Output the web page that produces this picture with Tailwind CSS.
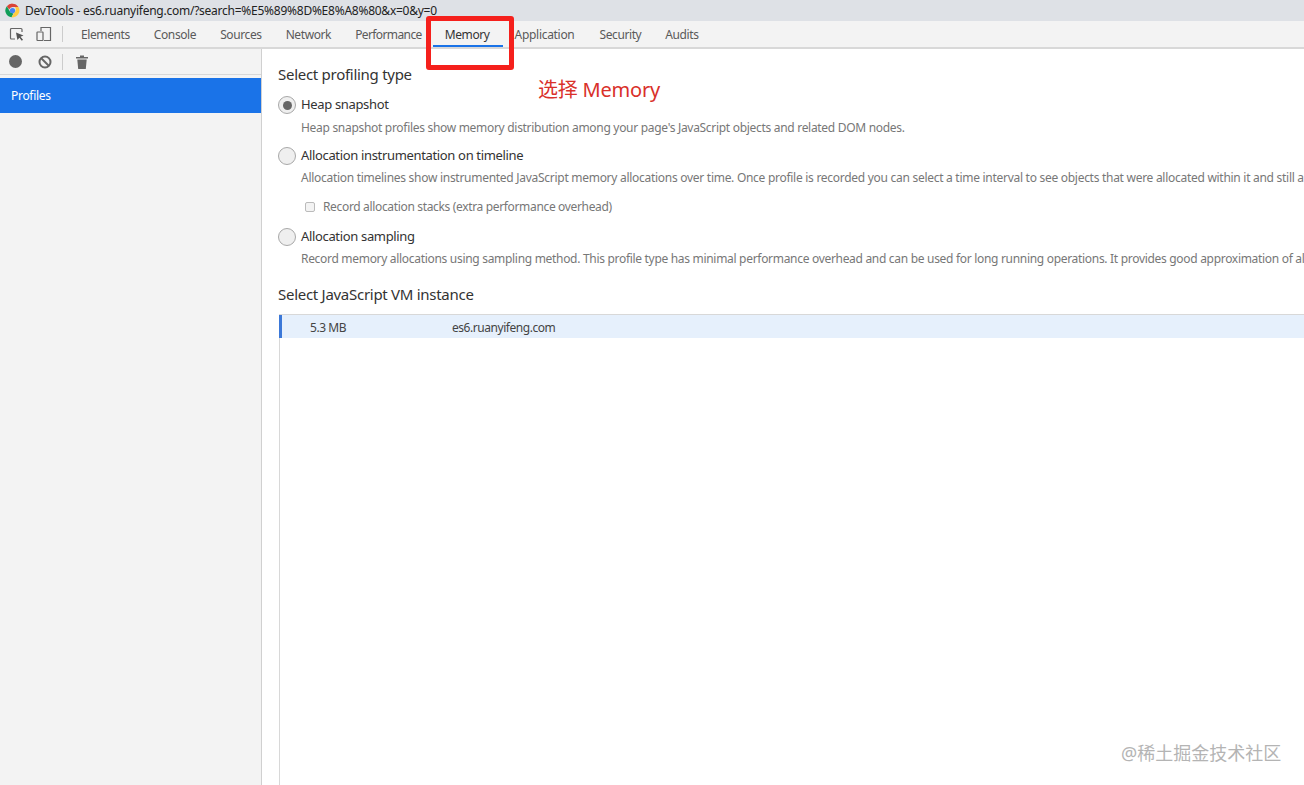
<!DOCTYPE html>
<html lang="zh">
<head>
  <meta charset="UTF-8" />
  <title>DevTools</title>
  <script src="https://cdn.jsdelivr.net/npm/@tailwindcss/browser@4"></script>
</head>
<body class="bg-white text-[#333] overflow-hidden font-['Noto_Sans','Noto_Sans_CJK_SC',sans-serif]">
  <div class="relative w-[1304px] h-[785px] overflow-hidden flex flex-col">
    <!-- window title -->
    <div class="h-[21px] shrink-0 bg-[#dee1e6] flex items-center pl-[5px] gap-[5px] text-[12px] tracking-[-0.25px] text-[#222]">
      <svg class="w-[15px] h-[15px]" viewBox="0 0 24 24">
        <path fill="#db4437" d="M12 1a11 11 0 0 1 9.5 5.5H12a5.5 5.5 0 0 0-5.3 4L3 5a11 11 0 0 1 9-4z"/>
        <path fill="#0f9d58" d="M3 5l4.6 8a5.500 5.500 0 0 0 6 3.300L10.500 22.900A11 11 0 0 1 3 5z"/>
        <path fill="#ffcd40" d="M21.500 6.500A11 11 0 0 1 10.500 22.900l4.700-8a5.500 5.500 0 0 0 .5-8.400z"/>
        <circle cx="12" cy="12" r="4.200" fill="#4285f4"/>
      </svg>
      <span class="leading-none">DevTools - es6.ruanyifeng.com/?search=%E5%89%8D%E8%A8%80&amp;x=0&amp;y=0</span>
    </div>

    <!-- main tabs -->
    <div class="h-[28px] shrink-0 bg-[#f3f3f3] border-b-2 border-[#d8d8d8] flex items-center text-[12px] tracking-[-0.4px] text-[#5a5a5a]">
      <div class="w-[62px] flex items-center pl-[9px] gap-[11px] shrink-0">
        <svg class="w-[16px] h-[16px]" viewBox="0 0 16 16" fill="none">
          <path d="M6 13H2.500A1 1 0 0 1 1.500 12V3.500a1 1 0 0 1 1-1H12a1 1 0 0 1 1 1V6" stroke="#666" stroke-width="1.200"/>
          <path d="M7 6.500l7.500 3-3 1.200 2.500 3-1.200 1-2.400-3-2 2.300z" fill="#555"/>
        </svg>
        <svg class="w-[16px] h-[16px]" viewBox="0 0 16 16" fill="none" stroke="#666" stroke-width="1.200">
          <path d="M5 5V1.500h9.500v13H8"/>
          <rect x="1" y="6" width="6" height="8.500" rx="0.500"/>
        </svg>
      </div>
      <div class="w-px h-[16px] bg-[#ccc] shrink-0"></div>
      <nav class="flex h-full items-center ml-[18px] gap-[24px] pt-[2px]">
        <span>Elements</span>
        <span>Console</span>
        <span>Sources</span>
        <span>Network</span>
        <span class="tracking-[-0.6px]">Performance</span>
        <span class="relative h-full -ml-px flex items-center text-[#333]">Memory
          <i class="absolute left-[-12px] right-[-13px] bottom-0 h-[2px] bg-[#1a73e8]"></i>
        </span>
        <span class="ml-px tracking-[-0.3px]">Application</span>
        <span class="ml-px">Security</span>
        <span>Audits</span>
      </nav>
    </div>

    <div class="flex flex-1 min-h-0">
      <!-- sidebar -->
      <aside class="w-[262px] shrink-0 bg-[#f3f3f3] border-r border-[#d0d0d0] flex flex-col">
        <div class="h-[26px] border-b border-[#d8d8d8] flex items-center pl-[9px] shrink-0">
          <span class="w-[13px] h-[13px] rounded-full bg-[#666]"></span>
          <svg class="w-[14px] h-[14px] ml-[16px]" viewBox="0 0 14 14" fill="none" stroke="#666" stroke-width="2">
            <circle cx="7" cy="7" r="5.500"/>
            <path d="M3 3l8 8"/>
          </svg>
          <div class="w-px h-[16px] bg-[#ccc] ml-[10px]"></div>
          <svg class="w-[12px] h-[14px] ml-[13px]" viewBox="0 0 12 14" fill="#666">
            <path d="M0 2h4V.500h4V2h4v1.500H0zM1.300 4.500h9.400L9.800 14H2.200z"/>
          </svg>
        </div>
        <div class="mt-[3px] h-[35px] bg-[#1a73e8] text-white text-[12px] tracking-[-0.3px] flex items-center pl-[11px]">Profiles</div>
      </aside>

      <!-- content -->
      <main class="flex-1 min-w-0 pl-[16px] overflow-hidden">
        <h2 class="text-[15px] tracking-[-0.28px] leading-[20px] mt-[15px] text-[#333] whitespace-nowrap">Select profiling type</h2>

        <div class="flex items-center h-[20px] mt-[11px] text-[13px] tracking-[-0.34px] text-[#333] whitespace-nowrap">
          <span class="w-[18px] h-[18px] rounded-full border border-[#a8a8a8] bg-[#efefef] flex items-center justify-center shrink-0 mr-[5px]">
            <i class="w-[9px] h-[9px] rounded-full bg-[#666]"></i>
          </span>Heap snapshot
        </div>
        <p class="ml-[23px] mt-[3px] text-[12px] tracking-[-0.3px] leading-[20px] text-[#777] whitespace-nowrap">Heap snapshot profiles show memory distribution among your page's JavaScript objects and related DOM nodes.</p>

        <div class="flex items-center h-[20px] mt-[8px] text-[13px] tracking-[-0.34px] text-[#333] whitespace-nowrap">
          <span class="w-[18px] h-[18px] rounded-full border border-[#a8a8a8] bg-[#efefef] shrink-0 mr-[5px]"></span>Allocation instrumentation on timeline
        </div>
        <p class="ml-[23px] mt-[2px] text-[12px] tracking-[-0.28px] leading-[20px] text-[#777] whitespace-nowrap">Allocation timelines show instrumented JavaScript memory allocations over time. Once profile is recorded you can select a time interval to see objects that were allocated within it and still alive by the end of recording.</p>
        <div class="flex items-center ml-[27px] mt-[9px] h-[20px] text-[12px] tracking-[-0.34px] text-[#777] whitespace-nowrap">
          <span class="w-[10px] h-[10px] rounded-[2px] border border-[#bbb] bg-[#f3f3f3] mr-[8px]"></span>Record allocation stacks (extra performance overhead)
        </div>

        <div class="flex items-center h-[20px] mt-[10px] text-[13px] tracking-[-0.34px] text-[#333] whitespace-nowrap">
          <span class="w-[18px] h-[18px] rounded-full border border-[#a8a8a8] bg-[#efefef] shrink-0 mr-[5px]"></span>Allocation sampling
        </div>
        <p class="ml-[23px] mt-[2px] text-[12px] tracking-[-0.305px] leading-[20px] text-[#777] whitespace-nowrap">Record memory allocations using sampling method. This profile type has minimal performance overhead and can be used for long running operations. It provides good approximation of allocations broken down by JavaScript execution stack.</p>

        <h2 class="text-[15px] tracking-[-0.28px] leading-[20px] mt-[15px] text-[#333] whitespace-nowrap">Select JavaScript VM instance</h2>

        <div class="mt-[10px] ml-px h-[500px] border-l border-t border-[#d8d8d8]">
          <div class="h-[23px] pt-[2px] bg-[#e6f0fc] border-l-[3px] border-[#3b78d8] -ml-px flex items-center text-[12px] tracking-[-0.45px] text-[#444]">
            <span class="w-[170px] pl-[28px]">5.3 MB</span>
            <span>es6.ruanyifeng.com</span>
          </div>
        </div>
      </main>
    </div>

    <!-- annotation -->
    <div class="absolute left-[426px] top-[16px] w-[88px] h-[54px] border-[5px] border-[#f5201c] rounded-[3px]"></div>
    <div class="absolute left-[538px] top-[76px] text-[20px] leading-[28px] tracking-[-0.2px] text-[#d9302a] whitespace-nowrap">选择 Memory</div>
    <div class="absolute left-[1121px] top-[741px] text-[18px] leading-[24px] text-[#b4b4b4] whitespace-nowrap">@稀土掘金技术社区</div>
  </div>
</body>
</html>
